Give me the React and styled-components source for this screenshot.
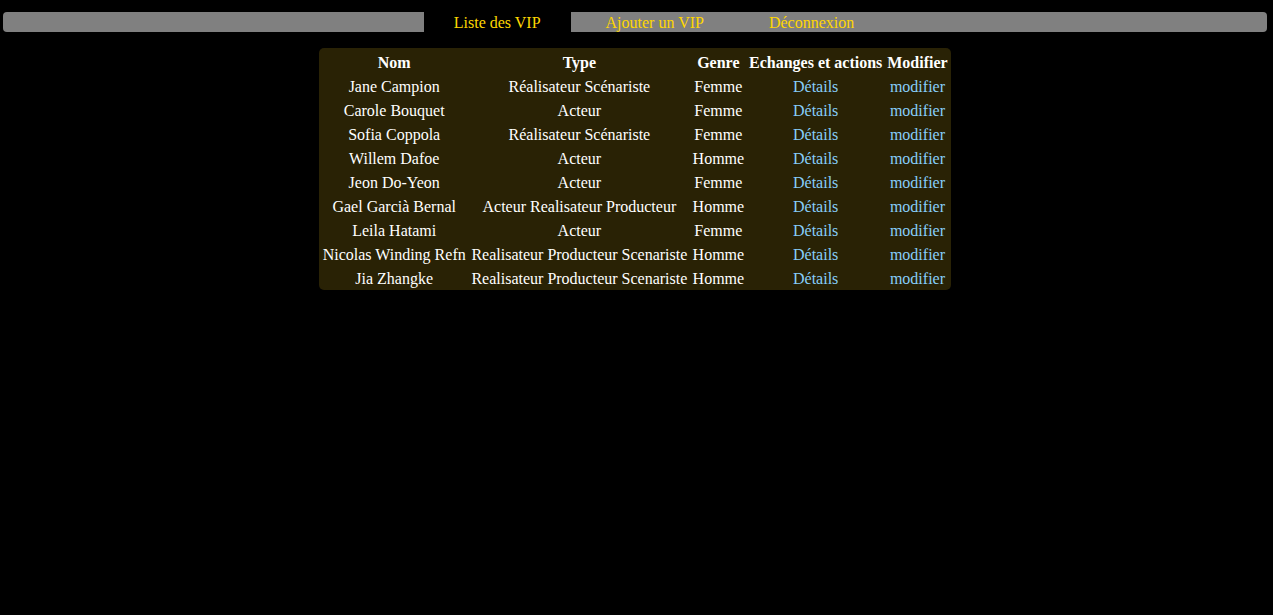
import React from "react";
import styled, { createGlobalStyle } from "styled-components";

const GlobalStyle = createGlobalStyle`
  body {
    margin: 0;
    background-color: #000;
    font-family: "Liberation Serif", "Times New Roman", serif;
    font-size: 16px;
  }
`

const Page = styled.div`
  padding: 12px 6px 0 3px;
`

const Nav = styled.ul`
  display: flex;
  justify-content: center;
  gap: 5px;
  height: 20px;
  margin: 0;
  padding: 0 0 0 38px;
  list-style: none;
  background-color: #808080;
  border-radius: 4px;
`

const NavItem = styled.li`
  display: flex;
  align-items: center;
  padding: 0 30px;
  background-color: ${(props) => (props.active ? "#000" : "transparent")};
`

const NavLink = styled.a`
  color: #ffd700;
  text-decoration: none;
  line-height: 18px;
  padding-top: 2px;
`

const Table = styled.table`
  width: 632px;
  margin: 16px auto 0;
  border-spacing: 2px;
  background-color: #292205;
  border-radius: 5px;
`

const Th = styled.th`
  padding: 4px 1px 0;
  line-height: 18px;
  color: #fff;
  font-weight: bold;
  white-space: nowrap;
`

const Td = styled.td`
  padding: 4px 1px 0;
  line-height: 18px;
  color: #fff;
  text-align: center;
  white-space: nowrap;
`

const CellLink = styled.a`
  color: #87cefa;
  text-decoration: none;
`

const vips = [
  { nom: "Jane Campion", type: "Réalisateur Scénariste", genre: "Femme" },
  { nom: "Carole Bouquet", type: "Acteur", genre: "Femme" },
  { nom: "Sofia Coppola", type: "Réalisateur Scénariste", genre: "Femme" },
  { nom: "Willem Dafoe", type: "Acteur", genre: "Homme" },
  { nom: "Jeon Do-Yeon", type: "Acteur", genre: "Femme" },
  { nom: "Gael Garcià Bernal", type: "Acteur Realisateur Producteur", genre: "Homme" },
  { nom: "Leila Hatami", type: "Acteur", genre: "Femme" },
  { nom: "Nicolas Winding Refn", type: "Realisateur Producteur Scenariste", genre: "Homme" },
  { nom: "Jia Zhangke", type: "Realisateur Producteur Scenariste", genre: "Homme" },
]

const App = () => {
  return (
    <>
      <GlobalStyle />
      <Page>
        <Nav>
          <NavItem active>
            <NavLink href="#">Liste des VIP</NavLink>
          </NavItem>
          <NavItem>
            <NavLink href="#">Ajouter un VIP</NavLink>
          </NavItem>
          <NavItem>
            <NavLink href="#">Déconnexion</NavLink>
          </NavItem>
        </Nav>
        <Table>
          <thead>
            <tr>
              <Th>Nom</Th>
              <Th>Type</Th>
              <Th>Genre</Th>
              <Th>Echanges et actions</Th>
              <Th>Modifier</Th>
            </tr>
          </thead>
          <tbody>
            {vips.map((vip) => (
              <tr key={vip.nom}>
                <Td>{vip.nom}</Td>
                <Td>{vip.type}</Td>
                <Td>{vip.genre}</Td>
                <Td>
                  <CellLink href="#">Détails</CellLink>
                </Td>
                <Td>
                  <CellLink href="#">modifier</CellLink>
                </Td>
              </tr>
            ))}
          </tbody>
        </Table>
      </Page>
    </>
  );
}

export default App;
